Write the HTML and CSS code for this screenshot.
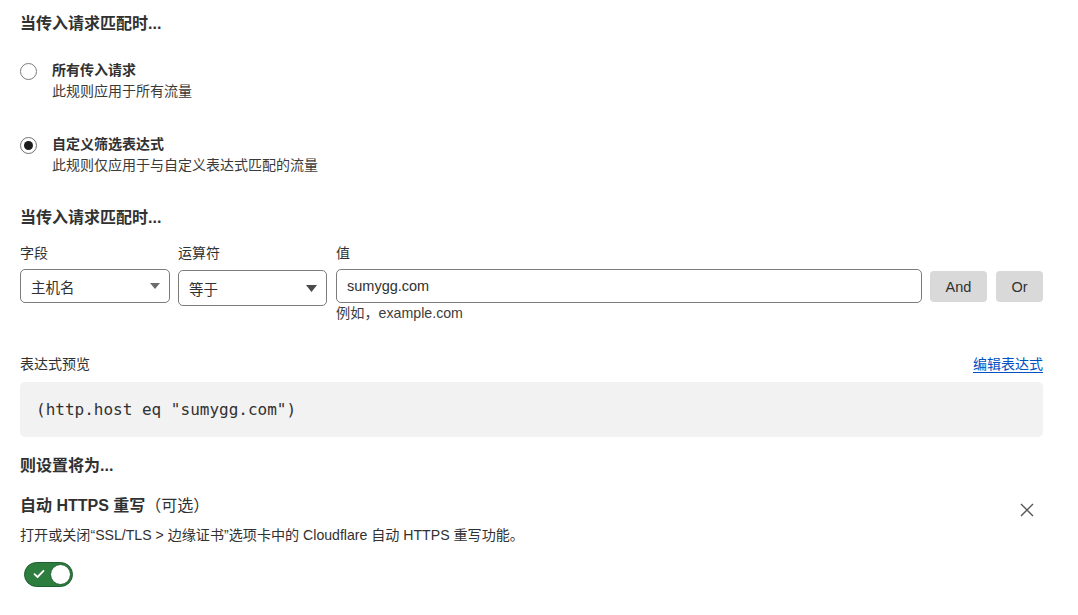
FILE: index.html
```html
<!DOCTYPE html>
<html lang="zh-CN">
<head>
<meta charset="utf-8">
<title>规则</title>
<link rel="stylesheet" href="styles.css">
</head>
<body>
<div class="page">
  <h2 class="heading h-first">当传入请求匹配时...</h2>

  <div class="radio-group">
    <label class="radio-option">
      <span class="radio"></span>
      <span class="radio-text">
        <span class="radio-label">所有传入请求</span>
        <span class="radio-desc">此规则应用于所有流量</span>
      </span>
    </label>
    <label class="radio-option option-second">
      <span class="radio checked"><span class="dot"></span></span>
      <span class="radio-text">
        <span class="radio-label">自定义筛选表达式</span>
        <span class="radio-desc">此规则仅应用于与自定义表达式匹配的流量</span>
      </span>
    </label>
  </div>

  <h2 class="heading h-second">当传入请求匹配时...</h2>

  <div class="builder">
    <div class="field field-name">
      <div class="field-label">字段</div>
      <div class="select select-a">
        <span>主机名</span>
        <svg class="caret" width="10" height="6" viewBox="0 0 10 6"><path d="M0 0h10L5 6z" fill="#6b6b6b"/></svg>
      </div>
    </div>
    <div class="field field-op">
      <div class="field-label">运算符</div>
      <div class="select select-b">
        <span>等于</span>
        <svg class="caret" width="11" height="7" viewBox="0 0 11 7"><path d="M0 0h11L5.5 7z" fill="#4a4a4a"/></svg>
      </div>
    </div>
    <div class="field field-value">
      <div class="field-label">值</div>
      <div class="input">sumygg.com</div>
      <div class="hint">例如，example.com</div>
    </div>
    <div class="buttons">
      <button class="btn btn-and">And</button>
      <button class="btn btn-or">Or</button>
    </div>
  </div>

  <div class="preview-head">
    <span class="preview-label">表达式预览</span>
    <a class="link" href="#">编辑表达式</a>
  </div>
  <div class="code">(http.host eq "sumygg.com")</div>

  <h2 class="heading h-third">则设置将为...</h2>

  <div class="setting">
    <div class="setting-head">
      <span class="setting-title">自动 HTTPS 重写<span class="optional">（可选）</span></span>
      <svg class="close" width="14" height="14" viewBox="0 0 14 14"><path d="M1 1L13 13M13 1L1 13" stroke="#555" stroke-width="1.4" fill="none"/></svg>
    </div>
    <div class="setting-desc">打开或关闭“SSL/TLS &gt; 边缘证书”选项卡中的 Cloudflare 自动 HTTPS 重写功能。</div>
    <div class="toggle">
      <svg class="check" width="12" height="10" viewBox="0 0 12 10"><path d="M1.5 5.2L4.5 8L10.5 1.8" stroke="#fff" stroke-width="1.8" fill="none" stroke-linecap="round" stroke-linejoin="round"/></svg>
      <span class="knob"></span>
    </div>
  </div>
</div>
</body>
</html>
```

FILE: styles.css
```css
* { box-sizing: border-box; }
html, body { margin: 0; padding: 0; background: #fff; }
body {
  font-family: "Liberation Sans", "Noto Sans CJK SC", sans-serif;
  color: #313131;
  font-size: 14px;
}
.page {
  width: 1078px;
  padding: 12px 35px 0 20px;
}
.heading {
  margin: 0;
  font-size: 16px;
  line-height: 24px;
  font-weight: 700;
  color: #313131;
}
.h-second { margin-top: 30.5px; }
.h-third { margin-top: 17px; }

.radio-group { margin-top: 23.5px; display: flex; flex-direction: column; }
.radio-option { display: flex; align-items: flex-start; }
.option-second { margin-top: 32px; }
.radio {
  width: 17px; height: 17px;
  border: 1.3px solid #7a7a7a;
  border-radius: 50%;
  margin-top: 3px;
  margin-right: 15px;
  display: flex; align-items: center; justify-content: center;
  flex: none;
}
.radio.checked { border-color: #6f6f6f; }
.dot { width: 9px; height: 9px; border-radius: 50%; background: #1d1d1d; }
.radio-text { display: flex; flex-direction: column; }
.radio-label { font-weight: 700; line-height: 21px; font-size: 14px; }
.radio-desc { line-height: 21px; font-size: 14px; color: #3a3a3a; }

.builder { display: flex; margin-top: 12.5px; align-items: flex-start; }
.field { display: flex; flex-direction: column; }
.field-label { line-height: 21px; margin-bottom: 5.5px; font-size: 14px; }
.field-name { width: 150px; margin-right: 8px; }
.field-op { width: 149px; margin-right: 9px; }
.field-value { width: 586px; margin-right: 8px; }
.select {
  display: flex; align-items: center; justify-content: space-between;
  border: 1px solid #7c7c7c;
  border-radius: 5px;
  padding: 0 9px 0 10px;
  font-size: 14.5px;
}
.select-a { height: 34px; }
.select-b { height: 36px; margin-top: 1px; padding-right: 9px; }
.input {
  height: 34px;
  border: 1px solid #7c7c7c;
  border-radius: 5px;
  padding: 0 10px;
  line-height: 32px;
  font-size: 14.5px;
}
.hint { line-height: 21px; font-size: 14.2px; color: #3d3d3d; }
.buttons { display: flex; gap: 9px; margin-top: 28.5px; }
.btn {
  height: 31px;
  border: none;
  border-radius: 4px;
  background: #d9d9d9;
  color: #313131;
  font-family: "Liberation Sans", sans-serif;
  font-size: 14.5px;
  padding: 0;
}
.btn-and { width: 57px; }
.btn-or { width: 47px; }

.preview-head {
  display: flex; justify-content: space-between; align-items: center;
  margin-top: 30px;
  line-height: 21px;
}
.link { color: #0051c3; text-decoration: underline; text-underline-offset: 3px; font-size: 14px; }
.code {
  margin-top: 6.5px;
  height: 55px;
  background: #f2f2f2;
  border-radius: 5px;
  padding: 0 16px;
  font-family: "DejaVu Sans Mono", monospace;
  font-size: 16px;
  line-height: 55px;
  color: #313131;
}

.setting { margin-top: 16px; }
.setting-head { display: flex; justify-content: space-between; align-items: center; line-height: 24px; }
.setting-title { font-size: 16px; font-weight: 700; }
.optional { font-weight: 400; }
.close { margin-right: 9px; margin-top: 8px; }
.setting-desc { margin-top: 7.5px; line-height: 21px; font-size: 14.1px; }
.toggle {
  margin-top: 15.5px;
  margin-left: 4px;
  width: 49px; height: 25px;
  border-radius: 13px;
  background: #2c7d3e;
  border: 1px solid #1f6030;
  display: flex; align-items: center; justify-content: space-between;
  padding: 0 1px 0 8px;
}
.knob {
  width: 21px; height: 21px; border-radius: 50%;
  background: #fff;
  border: 1px solid #1f6030;
}
```
